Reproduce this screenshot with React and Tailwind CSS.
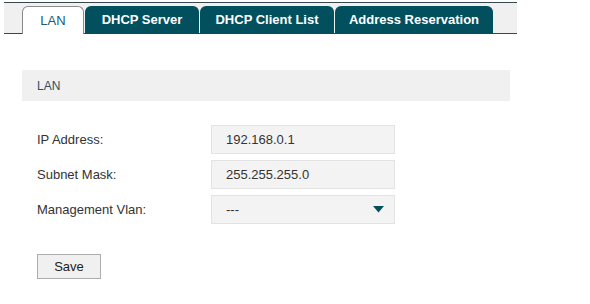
export default function App() {
  const tabs = ["DHCP Server", "DHCP Client List", "Address Reservation"];
  const fields = [
    { label: "IP Address:", value: "192.168.0.1" },
    { label: "Subnet Mask:", value: "255.255.255.0" },
  ];

  return (
    <div
      className="w-[590px] h-[304px] bg-white text-[#333] pt-[2px]"
      style={{ fontFamily: "Tahoma, 'Liberation Sans', Arial, sans-serif" }}
    >
      {/* Tab bar */}
      <div className="ml-[4px] w-[513px] h-[32px] bg-[#f0f0f0] border-t border-[#37474c] relative flex items-end pl-[18px]">
        <div className="absolute left-0 right-0 bottom-0 h-px bg-[#37474c]" />
        <div className="relative z-10 w-[62px] h-[28px] bg-white border border-b-0 border-[#8a8a8a] rounded-t-[6px] flex items-center justify-center text-[13px] text-[#1d5b73]">
          LAN
        </div>
        {tabs.map((t, i) => (
          <div
            key={t}
            className={
              "relative z-10 h-[28px] bg-[#02505e] rounded-t-[6px] flex items-center justify-center text-white text-[13px] font-bold " +
              (i === 0 ? "ml-[1px] w-[114px]" : i === 1 ? "ml-px w-[134px]" : "ml-px w-[158px]")
            }
          >
            {t}
          </div>
        ))}
      </div>

      {/* Section header */}
      <div className="mt-[36px] ml-[22px] w-[488px] h-[31px] bg-[#f0f0f0] flex items-center pl-[15px] text-[12px] text-[#2f4f5f]">
        LAN
      </div>

      {/* Fields */}
      <div className="mt-[24px] ml-[37px] flex flex-col gap-[6px]">
        {fields.map((f) => (
          <div key={f.label} className="flex items-center">
            <div className="w-[174px] text-[13px]">{f.label}</div>
            <div className="w-[184px] h-[29px] bg-[#f3f3f3] border border-[#e3e3e3] flex items-center pl-[14px] text-[13px]">
              {f.value}
            </div>
          </div>
        ))}
        <div className="flex items-center">
          <div className="w-[174px] text-[13px]">Management Vlan:</div>
          <div className="w-[184px] h-[29px] bg-[#f3f3f3] border border-[#e3e3e3] flex items-center justify-between pl-[14px] pr-[10px] text-[13px]">
            <span>---</span>
            <svg width="11" height="7" viewBox="0 0 11 7">
              <polygon points="0,0 11,0 5.5,6.5" fill="#02505e" />
            </svg>
          </div>
        </div>
      </div>

      {/* Save */}
      <div className="mt-[30px] ml-[37px] flex">
        <button className="w-[64px] h-[25px] bg-[#f0f0f0] border border-[#adadad] text-[13px] text-[#222]">
          Save
        </button>
      </div>
    </div>
  );
}
